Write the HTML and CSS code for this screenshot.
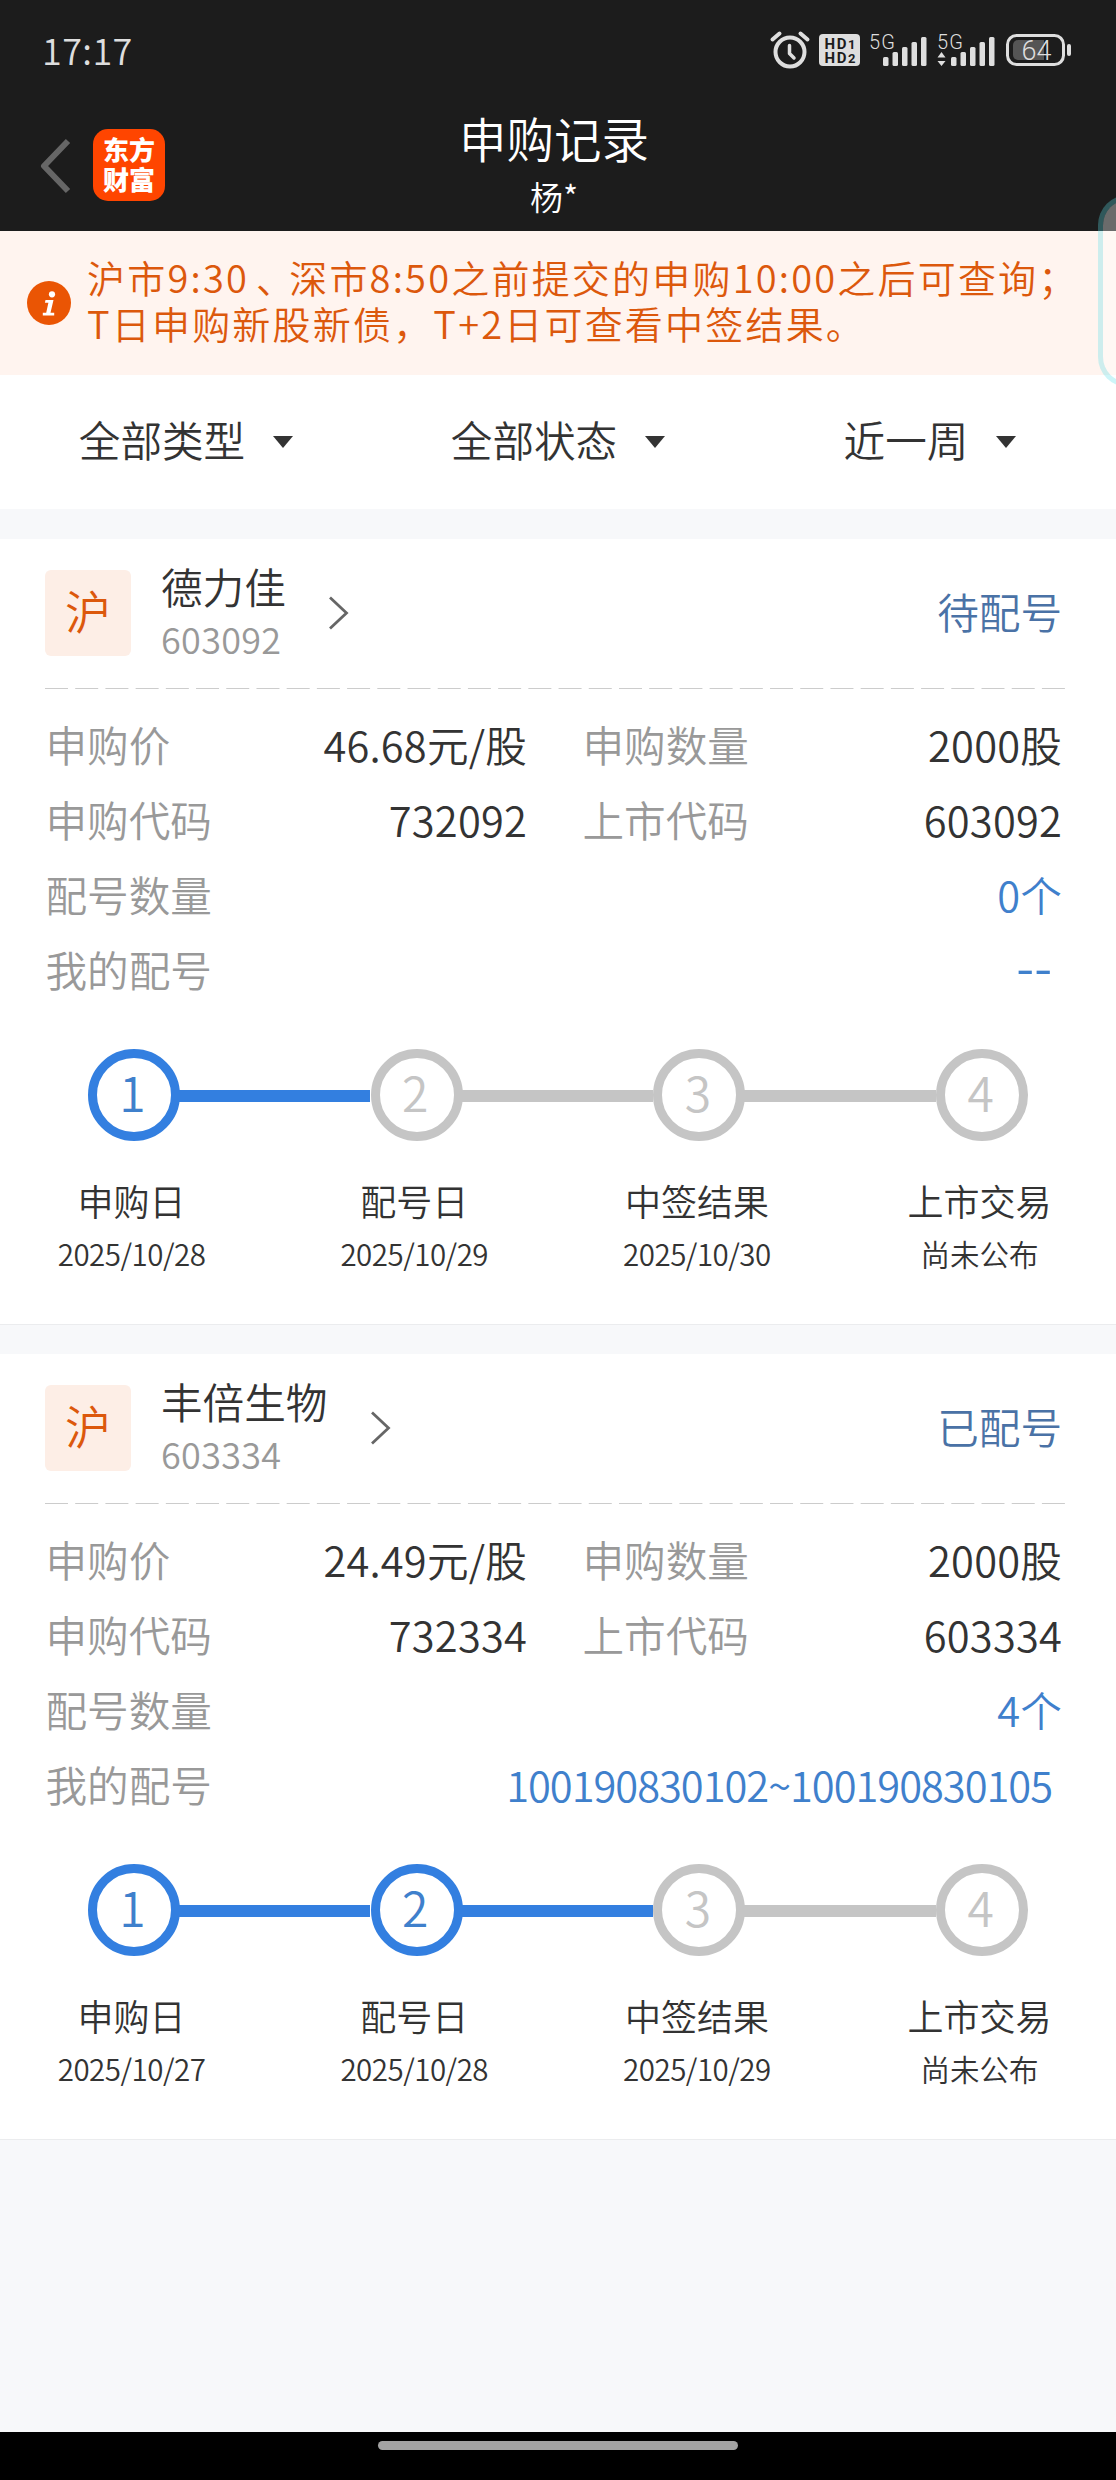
FILE: index.html
```html
<!DOCTYPE html>
<html lang="zh-CN">
<head>
<meta charset="utf-8">
<title>申购记录</title>
<link rel="stylesheet" href="styles.css">
</head>
<body>
<div class="page">
  <header class="top">
    <div class="statusbar">
      <span class="time">17:17</span>
      <div class="status-icons">
        <svg class="alarm" width="40" height="38" viewBox="0 0 40 38" fill="none" stroke="#dedede" stroke-width="4" stroke-linecap="round"><circle cx="20" cy="21" r="14.5"/><path d="M19.500 14.500v8l4.500 4.500" stroke-width="3.500" stroke-linejoin="round"/><path d="M2.500 8.500l7-6M37.500 8.500l-7-6"/></svg>
        <svg class="hd" width="41" height="32" viewBox="0 0 41 32"><rect width="41" height="32" rx="4" fill="#dedede"/><g fill="#1c1c1c" font-weight="700" font-size="15"><text x="5.500" y="14.500" textLength="31">HD<tspan font-size="13">1</tspan></text><text x="5.500" y="28.500" textLength="31">HD<tspan font-size="13">2</tspan></text></g></svg>
        <svg class="signal" width="59" height="34" viewBox="0 0 59 34" fill="#dedede"><text x="0" y="15.500" font-size="20" textLength="26">5G</text><rect x="14" y="24" width="5.500" height="9" rx="1.500"/><rect x="23.500" y="19" width="5.500" height="14" rx="1.500"/><rect x="33" y="14" width="5.500" height="19" rx="1.500"/><rect x="42.500" y="9" width="5.500" height="24" rx="1.500"/><rect x="52" y="4" width="5.500" height="29" rx="1.500"/></svg>
        <svg class="signal" width="59" height="34" viewBox="0 0 59 34" fill="#dedede"><text x="0" y="15.500" font-size="20" textLength="26">5G</text><path d="M4.500 19l4 5.500h-8zM4.500 33l4-5h-8z"/><rect x="14" y="24" width="5.500" height="9" rx="1.500"/><rect x="23.500" y="19" width="5.500" height="14" rx="1.500"/><rect x="33" y="14" width="5.500" height="19" rx="1.500"/><rect x="42.500" y="9" width="5.500" height="24" rx="1.500"/><rect x="52" y="4" width="5.500" height="29" rx="1.500"/></svg>
        <svg class="battery" width="65" height="32" viewBox="0 0 65 32"><rect x="1.500" y="1.500" width="56" height="29" rx="9" fill="none" stroke="#dedede" stroke-width="3"/><path d="M12 6h26v20H12a5 5 0 0 1-5-5V11a5 5 0 0 1 5-5z" fill="#555"/><rect x="61" y="10" width="4" height="12" rx="2" fill="#dedede"/><text x="15.500" y="25.500" font-size="27" textLength="30" fill="#dedede">64</text></svg>
      </div>
    </div>
    <div class="navbar">
      <svg class="back" width="32" height="56" viewBox="0 0 32 56" fill="none" stroke="#666" stroke-width="6" stroke-linejoin="round"><path d="M28 3L4 28l24 25"/></svg>
      <div class="logo"><span>东方</span><span>财富</span></div>
      <div class="heading"><h1>申购记录</h1><p>杨*</p></div>
    </div>
  </header>

  <section class="notice">
    <svg width="44" height="44" viewBox="0 0 44 44"><circle cx="22" cy="22" r="22" fill="#ea5504"/><g fill="#fff"><circle cx="25" cy="13.300" r="3.100"/><path d="M18.500 19h8l-3 12.700h3.700v2.800H15.800v-2.800h3.400l2.200-9.900h-3.500z"/></g></svg>
    <p><span>沪市9:30<i>、</i>深市8:50之前提交的申购10:00之后可查询；</span><span>T日申购新股新债，T+2日可查看中签结果。</span></p>
  </section>

  <nav class="filters">
    <span>全部类型<b></b></span>
    <span>全部状态<b></b></span>
    <span>近一周<b></b></span>
  </nav>

  <main>
    <article class="card">
      <div class="stock">
        <span class="market">沪</span>
        <div class="name"><strong>德力佳</strong><small>603092</small></div>
        <svg class="go" width="20" height="34" viewBox="0 0 20 34" fill="none" stroke="#666" stroke-width="2.800"><path d="M1 1.500L17.500 17 1 32.500"/></svg>
        <span class="state">待配号</span>
      </div>
      <svg class="dash" width="1020" height="1"><path d="M0 .5H1020" stroke="#ccc" stroke-dasharray="23 7.210"/></svg>
      <dl class="info">
        <div class="half"><dt>申购价</dt><dd>46.68元/股</dd></div>
        <div class="half"><dt>申购数量</dt><dd>2000股</dd></div>
        <div class="half"><dt>申购代码</dt><dd>732092</dd></div>
        <div class="half"><dt>上市代码</dt><dd>603092</dd></div>
        <div class="full"><dt>配号数量</dt><dd>0个</dd></div>
        <div class="full mine"><dt>我的配号</dt><dd class="none">--</dd></div>
      </dl>
      <ol class="steps">
        <li class="on"><em>1</em><span>申购日</span><time>2025/10/28</time></li>
        <li><em>2</em><span>配号日</span><time>2025/10/29</time></li>
        <li><em>3</em><span>中签结果</span><time>2025/10/30</time></li>
        <li><em>4</em><span>上市交易</span><time class="pending">尚未公布</time></li>
      </ol>
    </article>

    <article class="card">
      <div class="stock">
        <span class="market">沪</span>
        <div class="name"><strong>丰倍生物</strong><small>603334</small></div>
        <svg class="go" width="20" height="34" viewBox="0 0 20 34" fill="none" stroke="#666" stroke-width="2.800"><path d="M1 1.500L17.500 17 1 32.500"/></svg>
        <span class="state">已配号</span>
      </div>
      <svg class="dash" width="1020" height="1"><path d="M0 .5H1020" stroke="#ccc" stroke-dasharray="23 7.210"/></svg>
      <dl class="info">
        <div class="half"><dt>申购价</dt><dd>24.49元/股</dd></div>
        <div class="half"><dt>申购数量</dt><dd>2000股</dd></div>
        <div class="half"><dt>申购代码</dt><dd>732334</dd></div>
        <div class="half"><dt>上市代码</dt><dd>603334</dd></div>
        <div class="full"><dt>配号数量</dt><dd>4个</dd></div>
        <div class="full mine"><dt>我的配号</dt><dd class="range">100190830102~100190830105</dd></div>
      </dl>
      <ol class="steps">
        <li class="on"><em>1</em><span>申购日</span><time>2025/10/27</time></li>
        <li class="on"><em>2</em><span>配号日</span><time>2025/10/28</time></li>
        <li><em>3</em><span>中签结果</span><time>2025/10/29</time></li>
        <li><em>4</em><span>上市交易</span><time class="pending">尚未公布</time></li>
      </ol>
    </article>
  </main>

  <footer class="gesture"><i></i></footer>
  <div class="edge-panel"></div>
</div>
</body>
</html>
```
FILE: styles.css
```css
* { box-sizing: border-box; margin: 0; padding: 0; }
body {
  background: #f7f8fa;
  color: #333;
  font-family: "Noto Sans CJK SC", sans-serif;
  font-weight: 350;
  font-size: 41.6px;
}
i, em { font-style: normal; }
.page {
  position: relative;
  width: 1116px;
  height: 2480px;
  overflow: hidden;
  display: flex;
  flex-direction: column;
}

/* header */
.top { height: 231px; background: #1c1c1c; color: #fff; }
.statusbar {
  height: 100px;
  padding: 0 45px 0 42px;
  display: flex;
  align-items: center;
  justify-content: space-between;
}
.time { font-size: 36px; line-height: 50px; color: #dedede; letter-spacing: .4px; padding-bottom: 3px; }
.status-icons { display: flex; align-items: center; }
.status-icons svg { overflow: visible; font-family: Roboto, sans-serif; }
.hd { margin: 0 9.500px 0 9px; }
.signal + .signal { margin-left: 9px; }
.battery { margin-left: 10px; }
.navbar { height: 131px; padding-left: 40px; display: flex; align-items: flex-start; }
.back { margin-top: 38px; }
.logo {
  width: 72px;
  height: 72px;
  margin: 29px 0 0 21px;
  padding: 5px 0 0;
  border-radius: 15px;
  background: #ff4500;
  font-size: 26px;
  font-weight: 900;
  line-height: 30px;
  text-align: center;
}
.logo span { display: block; }
.heading { width: 778px; text-align: center; }
.heading h1 { margin-top: 8px; font-size: 47.500px; font-weight: 350; line-height: 60px; }
.heading p { font-size: 33px; line-height: 40px; margin-top: 8px; }

/* notice */
.notice {
  height: 144px;
  padding: 0 0 0 27px;
  background: #fff4ef;
  color: #dc580c;
  display: flex;
  align-items: center;
  gap: 16px;
}
.notice p { font-size: 38px; line-height: 46px; letter-spacing: 2.200px; margin-top: -6px; white-space: nowrap; }
.notice span { display: block; }
.notice i { margin: 0 -7px 0 7px; }

/* filters */
.filters { height: 134px; background: #fff; display: grid; grid-template-columns: repeat(3, 1fr); }
.filters span { display: flex; align-items: center; justify-content: center; gap: 28px; padding-bottom: 7px; }
.filters b { border: 10.500px solid transparent; border-top: 12px solid #333; border-bottom: 0; margin-top: 6px; }

/* record cards */
.card { height: 786px; margin-top: 30px; padding: 0 51px 0 45px; background: #fff; border-bottom: 1px solid #ebecee; }
.card + .card { margin-top: 29px; }
.stock { height: 149px; padding-top: 31px; display: flex; align-items: flex-start; }
.market {
  width: 86px;
  height: 86px;
  border-radius: 6px;
  background: #fdeee6;
  color: #dc580c;
  font-size: 46px;
  line-height: 79px;
  text-align: center;
}
.name { margin-left: 30px; margin-top: -12px; }
.name strong { display: block; font-weight: 350; line-height: 56px; }
.name small { display: block; font-size: 36px; line-height: 48px; color: #999; letter-spacing: .3px; }
.go { margin: 26px 0 0 43.500px; }
.state { margin: 13px 3px 0 auto; line-height: 56px; color: #4a72a6; }
.dash { display: block; }
.info { padding: 18px 3px 0 0; display: grid; grid-template-columns: 482px 480px; column-gap: 55px; grid-auto-rows: 74.800px; }
.info div { display: flex; justify-content: space-between; align-items: center; }
.info .full { grid-column: 1 / -1; }
.info dt { color: #999; padding-left: .5px; }
.info dd { letter-spacing: .2px; }
.full dd { color: #3f80cc; }
.info .mine { padding-right: 10px; }
.info .none { font-size: 52px; line-height: 50px; letter-spacing: 0; padding-bottom: 7px; }
.info .range { letter-spacing: -1px; }

/* timeline */
.steps { list-style: none; margin: 43px -51px 0 -54.800px; display: grid; grid-template-columns: repeat(4, 282.700px); }
.steps li { position: relative; display: flex; flex-direction: column; align-items: center; }
.steps em {
  width: 92px;
  height: 92px;
  margin-left: 5px;
  padding-right: 3px;
  border: 9px solid #c5c5c5;
  border-radius: 50%;
  color: #c5c5c5;
  font-size: 48px;
  line-height: 67px;
  text-align: center;
}
.steps li:not(:last-child)::after {
  content: "";
  position: absolute;
  left: 188px;
  top: 41px;
  width: 192px;
  height: 12px;
  background: #c5c5c5;
}
.steps .on em { border-color: #337fe0; color: #3f80cc; }
.steps .on::after { background: #337fe0 !important; }
.steps span { font-size: 36px; line-height: 50px; margin-top: 34px; }
.steps time { font-size: 29.500px; line-height: 40px; margin-top: 8px; letter-spacing: -.5px; }
.steps .pending { letter-spacing: 0; }

/* system overlays */
.gesture { height: 48px; margin-top: auto; padding-top: 9px; background: #000; }
.gesture i { display: block; width: 360px; height: 9px; margin: 0 auto; border-radius: 5px; background: #a2a2a2; }
.edge-panel {
  position: absolute;
  left: 1098px;
  top: 195px;
  width: 60px;
  height: 192px;
  border: 5px solid rgba(92, 222, 232, .31);
  border-radius: 32px;
  background: rgba(255, 255, 255, .35) padding-box;
}
```
